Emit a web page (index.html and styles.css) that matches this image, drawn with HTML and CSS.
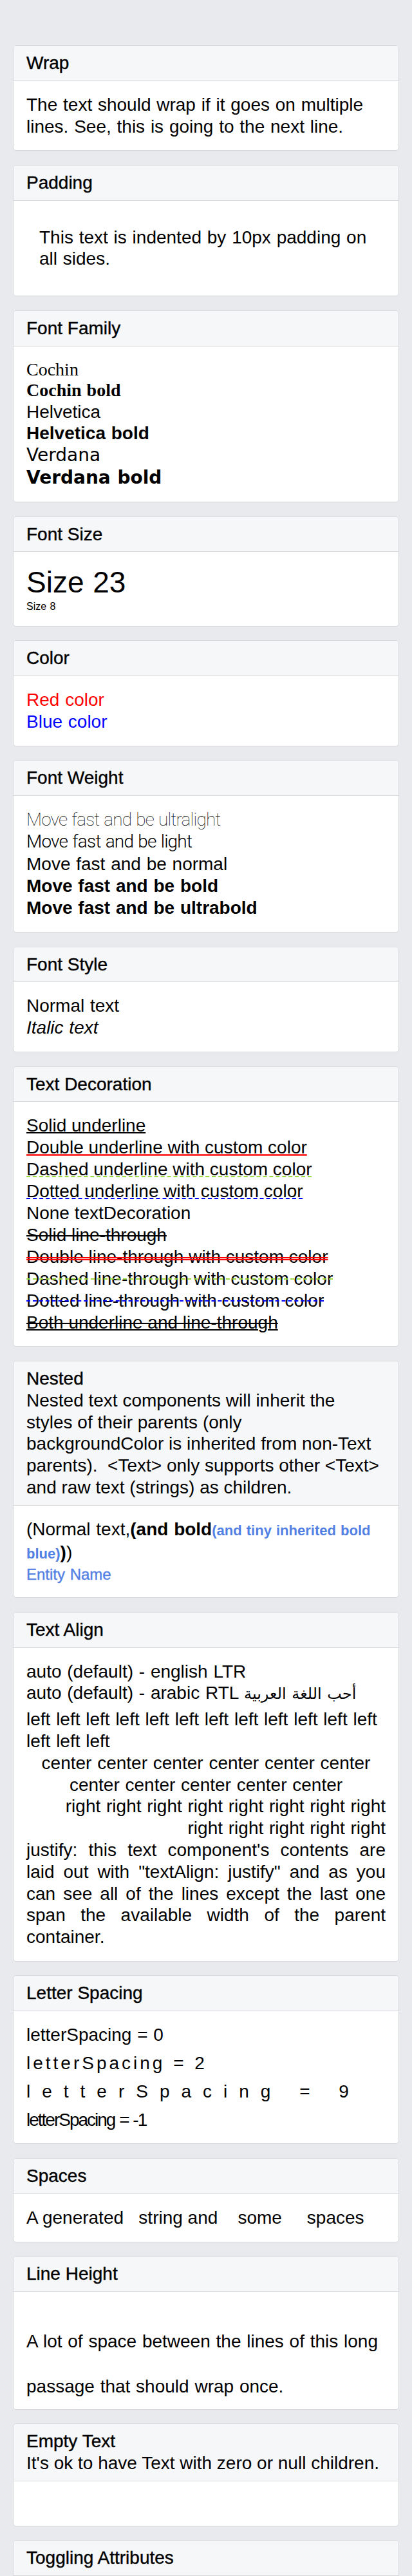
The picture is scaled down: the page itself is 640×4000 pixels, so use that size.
FILE: index.html
```html
<!DOCTYPE html>
<html lang="en">
<head>
<meta charset="utf-8">
<title>Text</title>
<link rel="stylesheet" href="styles.css">
</head>
<body>
<main class="page">

  <section class="card">
    <div class="card-head"><h2 class="card-title">Wrap</h2></div>
    <div class="card-body">
      <p>The text should wrap if it goes on multiple lines. See, this is going to the next line.</p>
    </div>
  </section>

  <section class="card">
    <div class="card-head"><h2 class="card-title">Padding</h2></div>
    <div class="card-body">
      <p class="padded">This text is indented by 10px padding on all sides.</p>
    </div>
  </section>

  <section class="card">
    <div class="card-head"><h2 class="card-title">Font Family</h2></div>
    <div class="card-body">
      <p class="ff-cochin">Cochin</p>
      <p class="ff-cochin bold">Cochin bold</p>
      <p>Helvetica</p>
      <p class="bold">Helvetica bold</p>
      <p class="ff-verdana">Verdana</p>
      <p class="ff-verdana bold">Verdana bold</p>
    </div>
  </section>

  <section class="card">
    <div class="card-head"><h2 class="card-title">Font Size</h2></div>
    <div class="card-body">
      <p class="size-23">Size 23</p>
      <p class="size-8">Size 8</p>
    </div>
  </section>

  <section class="card">
    <div class="card-head"><h2 class="card-title">Color</h2></div>
    <div class="card-body">
      <p class="c-red">Red color</p>
      <p class="c-blue">Blue color</p>
    </div>
  </section>

  <section class="card">
    <div class="card-head"><h2 class="card-title">Font Weight</h2></div>
    <div class="card-body weights">
      <p class="fw-ultralight">Move fast and be ultralight</p>
      <p class="fw-light">Move fast and be light</p>
      <p>Move fast and be normal</p>
      <p class="bold">Move fast and be bold</p>
      <p class="fw-ultrabold">Move fast and be ultrabold</p>
    </div>
  </section>

  <section class="card">
    <div class="card-head"><h2 class="card-title">Font Style</h2></div>
    <div class="card-body">
      <p>Normal text</p>
      <p class="italic">Italic text</p>
    </div>
  </section>

  <section class="card">
    <div class="card-head"><h2 class="card-title">Text Decoration</h2></div>
    <div class="card-body decorations">
      <p><span class="u-solid">Solid underline</span></p>
      <p><span class="u-double">Double underline with custom color</span></p>
      <p><span class="u-dashed">Dashed underline with custom color</span></p>
      <p><span class="u-dotted">Dotted underline with custom color</span></p>
      <p>None textDecoration</p>
      <p><span class="lt-solid">Solid line-through</span></p>
      <p><span class="lt-double">Double line-through with custom color</span></p>
      <p><span class="lt-dashed">Dashed line-through with custom color</span></p>
      <p><span class="lt-dotted">Dotted line-through with custom color</span></p>
      <p><span class="both">Both underline and line-through</span></p>
    </div>
  </section>

  <section class="card">
    <div class="card-head">
      <h2 class="card-title">Nested</h2>
      <p class="card-desc">Nested text components will inherit the styles of their parents (only<br>backgroundColor is inherited from non-Text parents).&nbsp; &lt;Text&gt; only supports other &lt;Text&gt; and raw text (strings) as children.</p>
    </div>
    <div class="card-body">
      <p>(Normal text,<b class="bold">(and bold<span class="tiny-blue">(and tiny inherited bold blue)</span>)</b>)</p>
      <p class="entity">Entity Name</p>
    </div>
  </section>

  <section class="card">
    <div class="card-head"><h2 class="card-title">Text Align</h2></div>
    <div class="card-body">
      <p>auto (default) - english LTR</p>
      <p class="arabic-line">auto (default) - arabic RTL <span class="arabic" lang="ar">أحب اللغة العربية</span></p>
      <p class="ta-left">left left left left left left left left left left left left left left left</p>
      <p class="ta-center">center center center center center center center center center center center</p>
      <p class="ta-right">right right right right right right right right<br>right right right right right</p>
      <p class="ta-justify">justify: this text component's contents are laid out with "textAlign: justify" and as you can see all of the lines except the last one span the available width of the parent container.</p>
    </div>
  </section>

  <section class="card">
    <div class="card-head"><h2 class="card-title">Letter Spacing</h2></div>
    <div class="card-body spacing">
      <p class="ls-0">letterSpacing = 0</p>
      <p class="ls-2">letterSpacing = 2</p>
      <p class="ls-9">letterSpacing = 9</p>
      <p class="ls-neg">letterSpacing = -1</p>
    </div>
  </section>

  <section class="card">
    <div class="card-head"><h2 class="card-title">Spaces</h2></div>
    <div class="card-body">
      <p class="pre">A generated   string and    some     spaces</p>
    </div>
  </section>

  <section class="card">
    <div class="card-head"><h2 class="card-title">Line Height</h2></div>
    <div class="card-body lh-body">
      <p class="lh-tall">A lot of space between the lines of this long passage that should wrap once.</p>
    </div>
  </section>

  <section class="card">
    <div class="card-head">
      <h2 class="card-title">Empty Text</h2>
      <p class="card-desc">It's ok to have Text with zero or null children.</p>
    </div>
    <div class="card-body">
      <div class="empty"></div>
    </div>
  </section>

  <section class="card">
    <div class="card-head"><h2 class="card-title">Toggling Attributes</h2></div>
    <div class="card-body">
      <p>Tap the controls below to change attributes.</p>
      <p>See how it will even work on this nested text</p>
    </div>
  </section>

</main>
</body>
</html>
```

FILE: styles.css
```css
* {
  box-sizing: border-box;
}

html,
body {
  margin: 0;
  padding: 0;
}

body {
  background: #e9eaed;
  color: #000;
  font-family: "Liberation Sans", Arial, sans-serif;
  font-size: 28px;
  line-height: 33.8px;
}

.page {
  padding: 70px 20px 0;
}

.card {
  background: #fff;
  border: 1px solid #d6d7da;
  border-radius: 5px;
  margin-bottom: 21.5px;
  overflow: hidden;
}

.card-head {
  background: #f6f7f8;
  border-bottom: 1px solid #d6d7da;
  padding: 10px 20px;
}

.card-title {
  margin: 0;
  font-size: 28px;
  font-weight: 400;
  line-height: 33.8px;
  -webkit-text-stroke: 0.4px #000;
}

.card-desc {
  margin: 0;
  word-spacing: 0;
}

.card-body {
  padding: 20px;
}

.card-body p {
  word-spacing: 1px;
}

p {
  margin: 0;
}

.bold {
  font-weight: 700;
}

.italic {
  font-style: italic;
}

.padded {
  padding: 20px;
}

/* Font family */
.ff-cochin {
  font-family: "Liberation Serif", "Times New Roman", serif;
  line-height: 32.5px;
}

.ff-verdana {
  font-family: "DejaVu Sans", Verdana, sans-serif;
  line-height: 34.5px;
}

/* Font size */
.size-23 {
  font-size: 46px;
  line-height: 55px;
}

.size-8 {
  font-size: 16px;
  line-height: 19.5px;
}

/* Color */
.c-red {
  color: #ff0000;
}

.c-blue {
  color: #0000ff;
}

/* Font weight */
.weights p {
  line-height: 34.2px;
}

.fw-ultralight {
  font-family: Roboto, "Liberation Sans", sans-serif;
  font-weight: 100;
  letter-spacing: -0.8px;
}

.fw-light {
  font-family: Roboto, "Liberation Sans", sans-serif;
  font-weight: 300;
  letter-spacing: -0.8px;
}

.fw-ultrabold {
  font-weight: 900;
}

/* Text decoration */
.decorations p {
  line-height: 33.9px;
  word-spacing: 0;
}

.u-solid {
  text-decoration: underline solid #000;
  text-decoration-thickness: 2px;
}

.u-double {
  text-decoration: underline double #ff0000;
  text-decoration-thickness: 1px;
}

.u-dashed {
  text-decoration: underline dashed #9cdc40;
  text-decoration-thickness: 2px;
}

.u-dotted {
  text-decoration: underline dashed #0000ff;
  text-decoration-thickness: 1.5px;
}

.lt-solid {
  text-decoration: line-through solid #000;
  text-decoration-thickness: 2px;
}

.lt-double {
  text-decoration: line-through double #ff0000;
  text-decoration-thickness: 2px;
}

.lt-dashed {
  text-decoration: line-through dashed #9cdc40;
  text-decoration-thickness: 2px;
}

.lt-dotted {
  text-decoration: line-through dashed #0000ff;
  text-decoration-thickness: 1.5px;
}

.both {
  text-decoration: underline line-through solid #000;
  text-decoration-thickness: 2px;
}

/* Nested */
.tiny-blue {
  font-size: 22px;
  color: #527fe4;
}

.entity {
  font-size: 24px;
  line-height: 31px;
  color: #527fe4;
  -webkit-text-stroke: 0.4px #527fe4;
}

/* Text align */
.arabic-line {
  margin-bottom: 5px;
}

.arabic {
  font-family: "DejaVu Sans", "Noto Sans", sans-serif;
  font-size: 24px;
}

.ta-left {
  text-align: left;
}

.ta-center {
  text-align: center;
}

.ta-right {
  text-align: right;
}

.ta-justify {
  text-align: justify;
}

/* Letter spacing */
.spacing p + p {
  margin-top: 10px;
}

.ls-0 {
  letter-spacing: 0;
}

.ls-2 {
  letter-spacing: 4px;
}

.ls-9 {
  letter-spacing: 18px;
}

.ls-neg {
  letter-spacing: -2px;
}

/* Spaces */
.card-body .pre {
  white-space: pre-wrap;
  word-spacing: 0;
}

/* Line height */
.lh-body {
  padding: 42px 20px 0;
}

.lh-tall {
  line-height: 70px;
}

/* Empty text */
.empty {
  height: 29px;
}
```
